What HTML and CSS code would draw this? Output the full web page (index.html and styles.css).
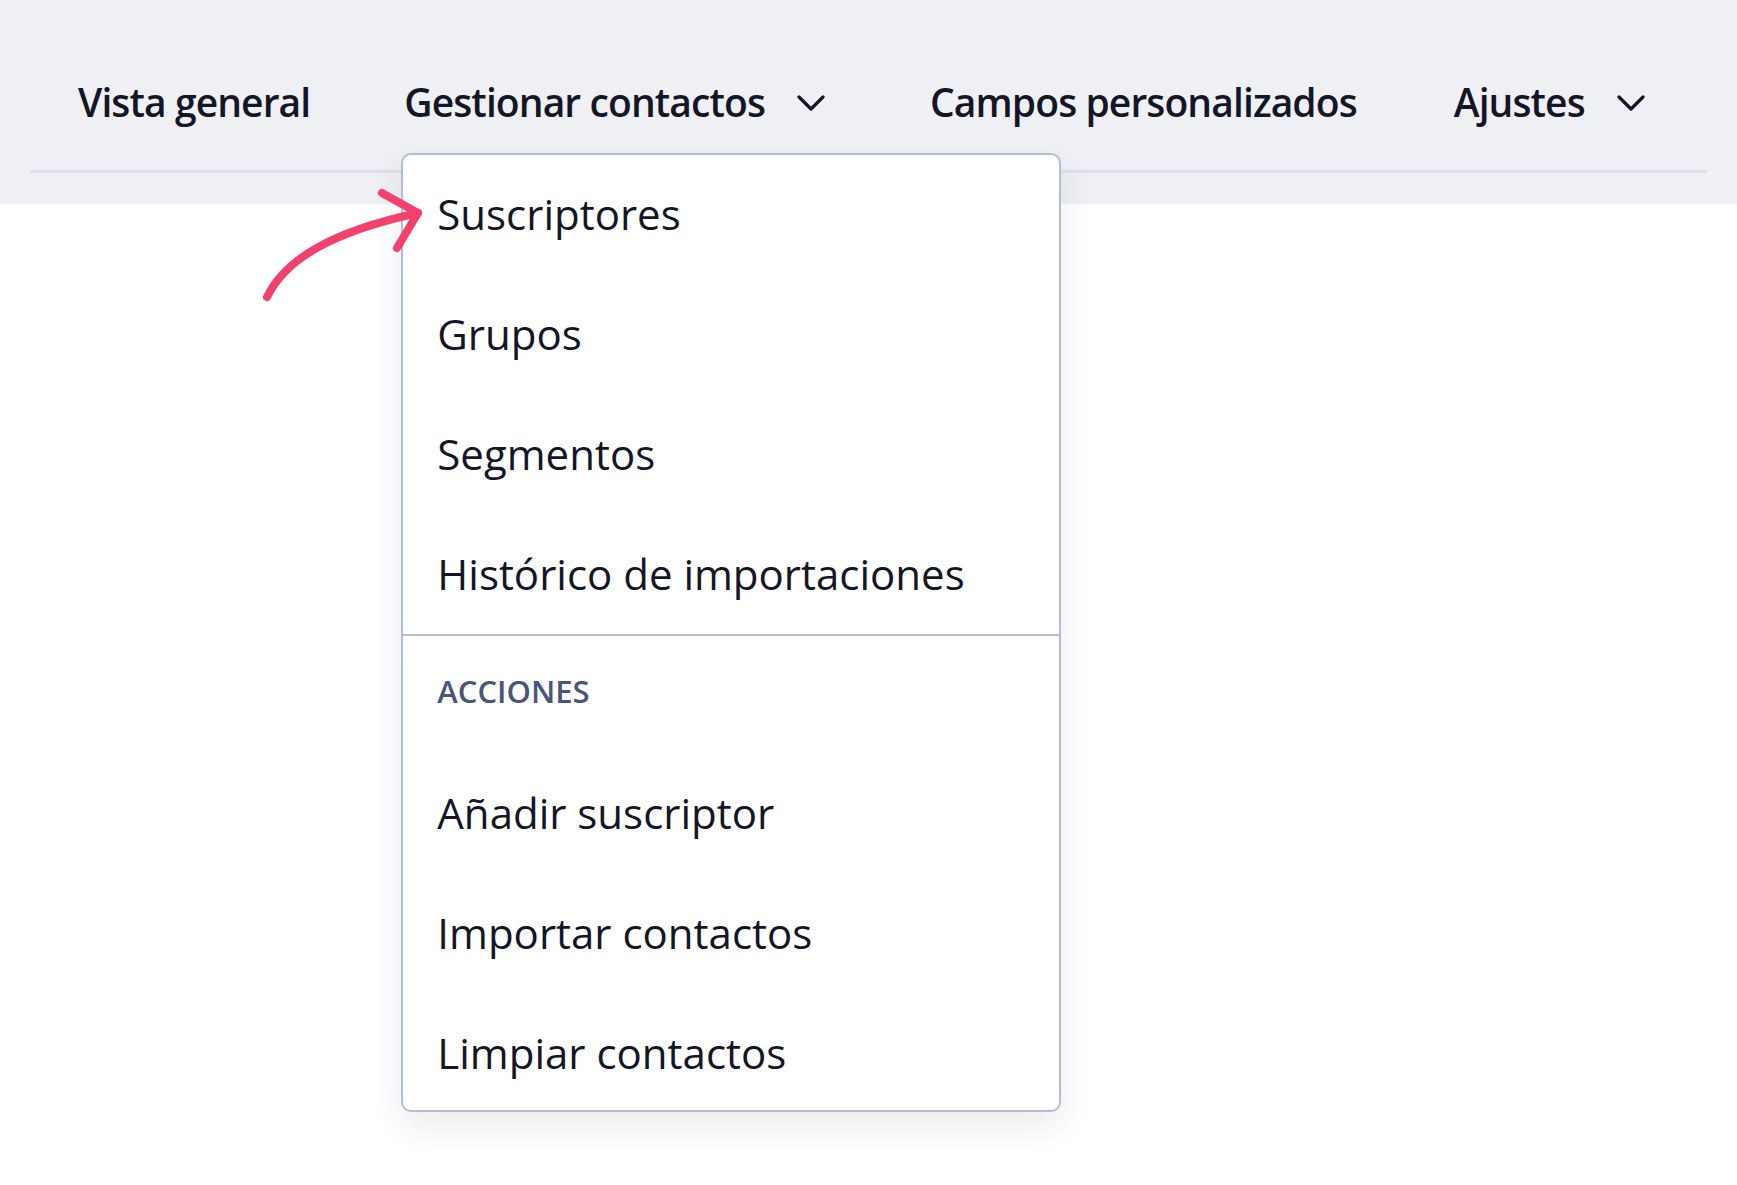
FILE: index.html
```html
<!DOCTYPE html>
<html lang="es">
<head>
<meta charset="utf-8">
<title>Gestionar contactos</title>
<link rel="stylesheet" href="styles.css">
</head>
<body>
<div class="page">
  <header class="topbar">
    <nav class="tabs">
      <div class="tab">Vista general</div>
      <div class="tab has-menu">
        <span>Gestionar contactos</span>
        <svg class="chev" viewBox="0 0 28 16" width="28" height="16" aria-hidden="true"><polyline points="2,2 14,14 26,2"/></svg>
        <div class="dropdown">
          <ul class="group">
            <li class="item">Suscriptores</li>
            <li class="item">Grupos</li>
            <li class="item">Segmentos</li>
            <li class="item">Histórico de importaciones</li>
          </ul>
          <div class="group-title">ACCIONES</div>
          <ul class="group">
            <li class="item">Añadir suscriptor</li>
            <li class="item">Importar contactos</li>
            <li class="item">Limpiar contactos</li>
          </ul>
        </div>
      </div>
      <div class="tab tab-wide">Campos personalizados</div>
      <div class="tab has-menu">
        <span>Ajustes</span>
        <svg class="chev" viewBox="0 0 28 16" width="28" height="16" aria-hidden="true"><polyline points="2,2 14,14 26,2"/></svg>
      </div>
    </nav>
  </header>
  <svg class="pointer" viewBox="0 0 190 130" width="190" height="130" aria-hidden="true">
    <path d="M17 117 C 35 80, 80 52, 168 33" />
    <path d="M132 13 L168 33 L147 68" />
  </svg>
</div>
</body>
</html>
```

FILE: styles.css
```css
* { box-sizing: border-box; }

html, body {
  margin: 0;
  padding: 0;
  background: #ffffff;
}

body {
  font-family: "Open Sans", "Noto Sans", sans-serif;
  color: #141627;
  width: 1737px;
  height: 1185px;
  overflow: hidden;
}

.page {
  position: relative;
  height: 100%;
}

.topbar {
  background: #eff0f4;
  padding: 0 30px 31px;
}

.tabs {
  display: flex;
  align-items: center;
  padding: 72px 0 38px 48px;
  border-bottom: 3px solid #dcdfe9;
  gap: 94px;
}

.tab {
  position: relative;
  display: flex;
  align-items: center;
  gap: 32px;
  font-size: 39px;
  font-weight: 600;
  line-height: 60px;
  letter-spacing: -0.9px;
  white-space: nowrap;
}

.tab.has-menu { margin-right: 11px; }

.tab.tab-wide { margin-right: 3px; }

.chev {
  fill: none;
  stroke: #141627;
  stroke-width: 3.2;
  stroke-linecap: round;
  stroke-linejoin: round;
  margin-top: 2px;
}

.dropdown {
  position: absolute;
  left: -3px;
  top: 81px;
  width: 660px;
  height: 959px;
  background: #ffffff;
  border: 2px solid #b5bdd3;
  border-radius: 10px;
  box-shadow: 0 14px 34px rgba(30, 40, 80, 0.09);
  overflow: hidden;
  z-index: 2;
  letter-spacing: 0;
}

.group {
  list-style: none;
  margin: 0;
  padding: 0;
}

.group:first-child { margin-top: -1px; }

.item {
  padding-left: 34px;
  font-size: 42px;
  font-weight: 400;
  line-height: 120px;
  color: #141627;
}

.group-title {
  border-top: 2px solid #b5bdd3;
  padding: 34px 34px 41px;
  font-size: 31px;
  line-height: 42px;
  font-weight: 600;
  color: #4a5578;
}

.pointer {
  position: absolute;
  left: 250px;
  top: 180px;
  z-index: 3;
  fill: none;
  stroke: #f4416b;
  stroke-width: 8;
  stroke-linecap: round;
  stroke-linejoin: round;
}
```
